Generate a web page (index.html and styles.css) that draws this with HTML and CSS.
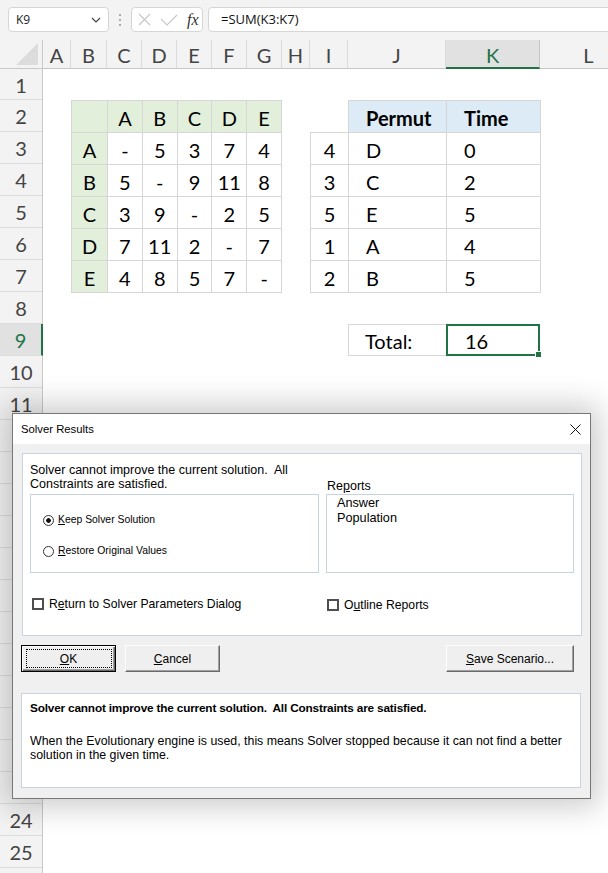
FILE: index.html
```html
<!DOCTYPE html>
<html>
<head>
<meta charset="utf-8">
<link rel="stylesheet" href="styles.css">
</head>
<body>
<div class="formula-bar">
  <div class="namebox"><span>K9</span>
    <svg class="chev" width="10" height="6" viewBox="0 0 10 6"><polyline points="1,1 5,5 9,1" fill="none" stroke="#444" stroke-width="1.2"/></svg>
  </div>
  <div class="dots">
    <svg width="4" height="14" viewBox="0 0 4 14"><circle cx="2" cy="2" r="1.1" fill="#9a9a9a"/><circle cx="2" cy="7" r="1.1" fill="#9a9a9a"/><circle cx="2" cy="12" r="1.1" fill="#9a9a9a"/></svg>
  </div>
  <div class="fxbox">
    <svg width="13" height="13" viewBox="0 0 13 13"><path d="M1 1 L12 12 M12 1 L1 12" stroke="#c6c6c6" stroke-width="1.1" fill="none"/></svg>
    <svg class="ck" width="18" height="12" viewBox="0 0 18 12"><polyline points="1,5 7,11 17,1" fill="none" stroke="#c6c6c6" stroke-width="1.1"/></svg>
    <span class="fx">fx</span>
  </div>
  <div class="formula">=SUM(K3:K7)</div>
</div>

<div class="sheet">
  <div class="corner"><svg width="22" height="22" viewBox="0 0 22 22"><polygon points="22,0 22,22 0,22" fill="#dcdcdc"/></svg></div>
  <div class="ch">A</div><div class="ch">B</div><div class="ch">C</div><div class="ch">D</div><div class="ch">E</div><div class="ch">F</div><div class="ch">G</div><div class="ch">H</div><div class="ch">I</div><div class="ch">J</div><div class="ch sel">K</div><div class="ch">L</div>

  <div class="rh">1</div><div class="rh">2</div><div class="rh">3</div><div class="rh">4</div><div class="rh">5</div><div class="rh">6</div><div class="rh">7</div><div class="rh">8</div><div class="rh sel">9</div><div class="rh">10</div><div class="rh">11</div><div class="rh"></div><div class="rh"></div><div class="rh"></div><div class="rh"></div><div class="rh"></div><div class="rh"></div><div class="rh"></div><div class="rh"></div><div class="rh"></div><div class="rh"></div><div class="rh"></div><div class="rh"></div><div class="rh">24</div><div class="rh">25</div><div class="rh"></div>

  <table class="t t1">
    <colgroup><col style="width:36px"><col><col><col><col><col></colgroup>
    <tr class="g"><td></td><td>A</td><td>B</td><td>C</td><td>D</td><td>E</td></tr>
    <tr><td class="g">A</td><td>-</td><td>5</td><td>3</td><td>7</td><td>4</td></tr>
    <tr><td class="g">B</td><td>5</td><td>-</td><td>9</td><td>11</td><td>8</td></tr>
    <tr><td class="g">C</td><td>3</td><td>9</td><td>-</td><td>2</td><td>5</td></tr>
    <tr><td class="g">D</td><td>7</td><td>11</td><td>2</td><td>-</td><td>7</td></tr>
    <tr><td class="g">E</td><td>4</td><td>8</td><td>5</td><td>7</td><td>-</td></tr>
  </table>

  <table class="t t2">
    <colgroup><col style="width:38px"><col style="width:98px"><col style="width:94px"></colgroup>
    <tr><td class="blank"></td><td class="b l">Permut</td><td class="b l">Time</td></tr>
    <tr><td>4</td><td class="l">D</td><td class="l">0</td></tr>
    <tr><td>3</td><td class="l">C</td><td class="l">2</td></tr>
    <tr><td>5</td><td class="l">E</td><td class="l">5</td></tr>
    <tr><td>1</td><td class="l">A</td><td class="l">4</td></tr>
    <tr><td>2</td><td class="l">B</td><td class="l">5</td></tr>
  </table>

  <div class="total">
    <div class="total-label">Total:</div>
    <div class="total-val">16</div>
  </div>
</div>

<div class="dialog">
  <div class="titlebar">
    <span>Solver Results</span>
    <svg width="11" height="11" viewBox="0 0 11 11"><path d="M0.5 0.5 L10.5 10.5 M10.5 0.5 L0.5 10.5" stroke="#111" stroke-width="1" fill="none"/></svg>
  </div>
  <div class="panel">
    <div class="msg">Solver cannot improve the current solution.&nbsp; All<br>Constraints are satisfied.</div>
    <div class="reports-label">Re<u>p</u>orts</div>
    <div class="radios">
      <div class="radio"><span class="circle on"></span><span><u>K</u>eep Solver Solution</span></div>
      <div class="radio"><span class="circle"></span><span><u>R</u>estore Original Values</span></div>
    </div>
    <div class="listbox"><div>Answer</div><div>Population</div></div>
    <div class="check c1"><span class="box"></span><span>R<u>e</u>turn to Solver Parameters Dialog</span></div>
    <div class="check c2"><span class="box"></span><span>O<u>u</u>tline Reports</span></div>
  </div>
  <div class="buttons">
    <div class="btn default"><u>O</u>K</div>
    <div class="btn"><u>C</u>ancel</div>
    <div class="btn wide"><u>S</u>ave Scenario...</div>
  </div>
  <div class="info">
    <p class="strong">Solver cannot improve the current solution.&nbsp; All Constraints are satisfied.</p>
    <p class="body">When the Evolutionary engine is used, this means Solver stopped because it can not find a better<br>solution in the given time.</p>
  </div>
</div>
</body>
</html>
```
FILE: styles.css
```css
html, body {
  margin: 0;
  padding: 0;
  overflow: hidden;
}
body {
  width: 608px;
  height: 873px;
  position: relative;
  background: #fff;
  font-family: "Open Sans", "Noto Sans", sans-serif;
  color: #000;
}

/* formula bar */
.formula-bar {
  height: 40px;
  box-sizing: border-box;
  padding-top: 7px;
  background: #f3f3f3;
  display: flex;
  align-items: flex-start;
}
.namebox {
  margin-left: 8px;
  width: 101px;
  height: 25px;
  box-sizing: border-box;
  border: 1px solid #d6d6d6;
  border-radius: 4px;
  background: #fff;
  display: flex;
  align-items: center;
  justify-content: space-between;
  padding: 0 7px 0 7px;
  font-size: 12px;
  color: #222;
}
.dots {
  width: 22px;
  height: 25px;
  display: flex;
  align-items: center;
  justify-content: center;
}
.fxbox {
  width: 72px;
  height: 25px;
  box-sizing: border-box;
  border: 1px solid #d6d6d6;
  border-radius: 4px;
  background: #fff;
  display: flex;
  align-items: center;
  padding-left: 6px;
  gap: 8px;
}
.fxbox .ck { margin-left: 1px; }
.fx {
  font-family: "Liberation Serif", serif;
  font-style: italic;
  font-size: 16px;
  color: #333;
  margin-left: 1px;
}
.formula {
  margin-left: 5px;
  flex: 1;
  margin-right: -10px;
  height: 25px;
  box-sizing: border-box;
  border: 1px solid #d6d6d6;
  border-radius: 4px;
  background: #fff;
  padding-left: 12px;
  font-size: 13px;
  line-height: 23px;
  color: #111;
}

/* sheet grid */
.sheet {
  display: grid;
  grid-template-columns: 43px 28px 36px 35px 35px 35px 35px 35px 28px 38px 98px 94px 98px;
  grid-template-rows: 29px 31px repeat(25, 32px);
  font-family: "Lato", "Liberation Sans", sans-serif;
  font-size: 20px;
}
.corner {
  background: #f3f3f3;
  border-right: 1px solid #c9c9c9;
  border-bottom: 1px solid #c9c9c9;
  box-sizing: border-box;
  display: flex;
  align-items: flex-end;
  justify-content: flex-end;
  padding: 0 4px 3px 0;
}
.ch {
  background: #f3f3f3;
  border-right: 1px solid #dadada;
  border-bottom: 1px solid #c6c6c6;
  box-sizing: border-box;
  display: flex;
  align-items: center;
  justify-content: center;
  color: #444;
  padding-top: 2px;
}
.ch.sel {
  background: #e1e1e1;
  color: #217346;
  border-right-color: #c6c6c6;
  border-bottom: 2px solid #217346;
}
.rh {
  grid-column: 1;
  background: #f3f3f3;
  border-right: 1px solid #c9c9c9;
  border-bottom: 1px solid #dcdcdc;
  box-sizing: border-box;
  display: flex;
  align-items: center;
  justify-content: center;
  color: #444;
  padding-top: 1px;
}
.rh.sel {
  background: #e1e1e1;
  color: #217346;
  border-right: 2px solid #217346;
}

.t {
  border-collapse: collapse;
  table-layout: fixed;
  width: 100%;
  height: 100%;
  font-size: 20px;
}
.t td {
  border: 1px solid #d6d6d6;
  padding: 3px 0 0 0;
  text-align: center;
  height: 32px;
  box-sizing: border-box;
  white-space: nowrap;
}
.t1 {
  grid-column: 3 / 9;
  grid-row: 3 / 9;
}
.t2 {
  grid-column: 10 / 13;
  grid-row: 3 / 9;
}
.t .g, .t tr.g td {
  background: #e2efda;
}
.t2 .blank {
  border: none;
  border-bottom: 1px solid #d6d6d6;
}
.t2 .b {
  background: #ddebf7;
  font-weight: 700;
}
.t2 .l {
  text-align: left;
  padding-left: 17px;
}

.total {
  grid-column: 11 / 13;
  grid-row: 10;
  display: grid;
  grid-template-columns: 98px 94px;
}
.total-label {
  border: 1px solid #d6d6d6;
  border-right: none;
  padding-left: 16px;
  display: flex;
  align-items: center;
  padding-top: 2px;
}
.total-val {
  position: relative;
  border: 2px solid #217346;
  box-sizing: border-box;
  padding-left: 17px;
  display: flex;
  align-items: center;
  padding-top: 2px;
}
.total-val::after {
  content: "";
  position: absolute;
  right: -4px;
  bottom: -4px;
  width: 5px;
  height: 5px;
  background: #217346;
  border: 1px solid #fff;
}

/* dialog */
.dialog {
  position: absolute;
  left: 12px;
  top: 413px;
  width: 579px;
  height: 386px;
  box-sizing: border-box;
  border: 1px solid #777;
  background: #f0f0f0;
  box-shadow: 0 0 28px 8px rgba(0, 0, 0, 0.2);
  font-family: "Liberation Sans", Arial, sans-serif;
  font-size: 12.5px;
  color: #000;
}
.titlebar {
  height: 30px;
  background: #fff;
  display: flex;
  align-items: center;
  justify-content: space-between;
  padding: 0 9px 0 8px;
  font-size: 11.3px;
}
.panel {
  margin: 9px 8px 0 9px;
  height: 183px;
  box-sizing: border-box;
  border: 1px solid #c8d3dd;
  background: #fff;
  padding: 9px 6px 0 7px;
  display: grid;
  grid-template-columns: 289px 248px;
  grid-template-rows: auto 79px auto;
  column-gap: 7px;
  row-gap: 3px;
  align-content: start;
}
.msg {
  line-height: 14px;
  white-space: nowrap;
}
.reports-label {
  align-self: end;
  line-height: 14px;
  margin-bottom: -2px;
  padding-left: 1px;
}
.radios {
  border: 1px solid #c8d3dd;
  padding: 17px 0 0 12px;
  display: flex;
  flex-direction: column;
  gap: 15px;
  font-size: 10.4px;
}
.radio {
  display: flex;
  align-items: center;
  gap: 4px;
  line-height: 16px;
  height: 16px;
}
.circle {
  width: 11px;
  height: 11px;
  box-sizing: border-box;
  border: 1px solid #333;
  border-radius: 50%;
  background: #fff;
}
.circle.on {
  background: radial-gradient(circle, #111 0 2px, #fff 2.6px);
}
.listbox {
  border: 1px solid #c8d3dd;
  padding: 1px 10px;
  line-height: 15px;
  font-size: 12.7px;
}
.check {
  display: flex;
  align-items: center;
  gap: 5px;
  margin-top: 19px;
  line-height: 16px;
  font-size: 12.2px;
}
.c1 { padding-left: 2px; }
.c2 { padding-left: 1px; padding-top: 2px; }
.box {
  width: 12px;
  height: 12px;
  box-sizing: border-box;
  border: 2px solid #4f4f4f;
  background: #fff;
}

.buttons {
  display: flex;
  margin: 9px 16px 0 8px;
  height: 27px;
}
.btn {
  position: relative;
  width: 95px;
  height: 27px;
  box-sizing: border-box;
  display: flex;
  align-items: center;
  justify-content: center;
  font-size: 12px;
  background: #efefef;
  border: 1px solid;
  border-color: #fdfdfd #6a6a6a #6a6a6a #fdfdfd;
  box-shadow: inset -1px -1px #a0a0a0;
}
.btn + .btn {
  margin-left: 9px;
}
.btn.wide {
  margin-left: auto;
  width: 128px;
}
.btn.default {
  border: 1px solid #000;
  box-shadow: inset 1px 1px #fdfdfd, inset -1px -1px #6a6a6a, inset -2px -2px #a0a0a0;
}
.btn.default::after {
  content: "";
  position: absolute;
  left: 4px;
  top: 3px;
  right: 3px;
  bottom: 3px;
  border: 1px dotted #000;
}

.info {
  margin: 21px 9px 0 8px;
  height: 95px;
  box-sizing: border-box;
  border: 1px solid #c8d3dd;
  background: #fff;
  padding: 7px 8px 0 8px;
}
.info p {
  margin: 0;
  line-height: 14px;
  white-space: nowrap;
}
.info .strong {
  font-weight: 700;
  font-size: 11.8px;
  letter-spacing: -0.18px;
}
.info .body {
  margin-top: 19px;
  font-size: 12.35px;
}
```
